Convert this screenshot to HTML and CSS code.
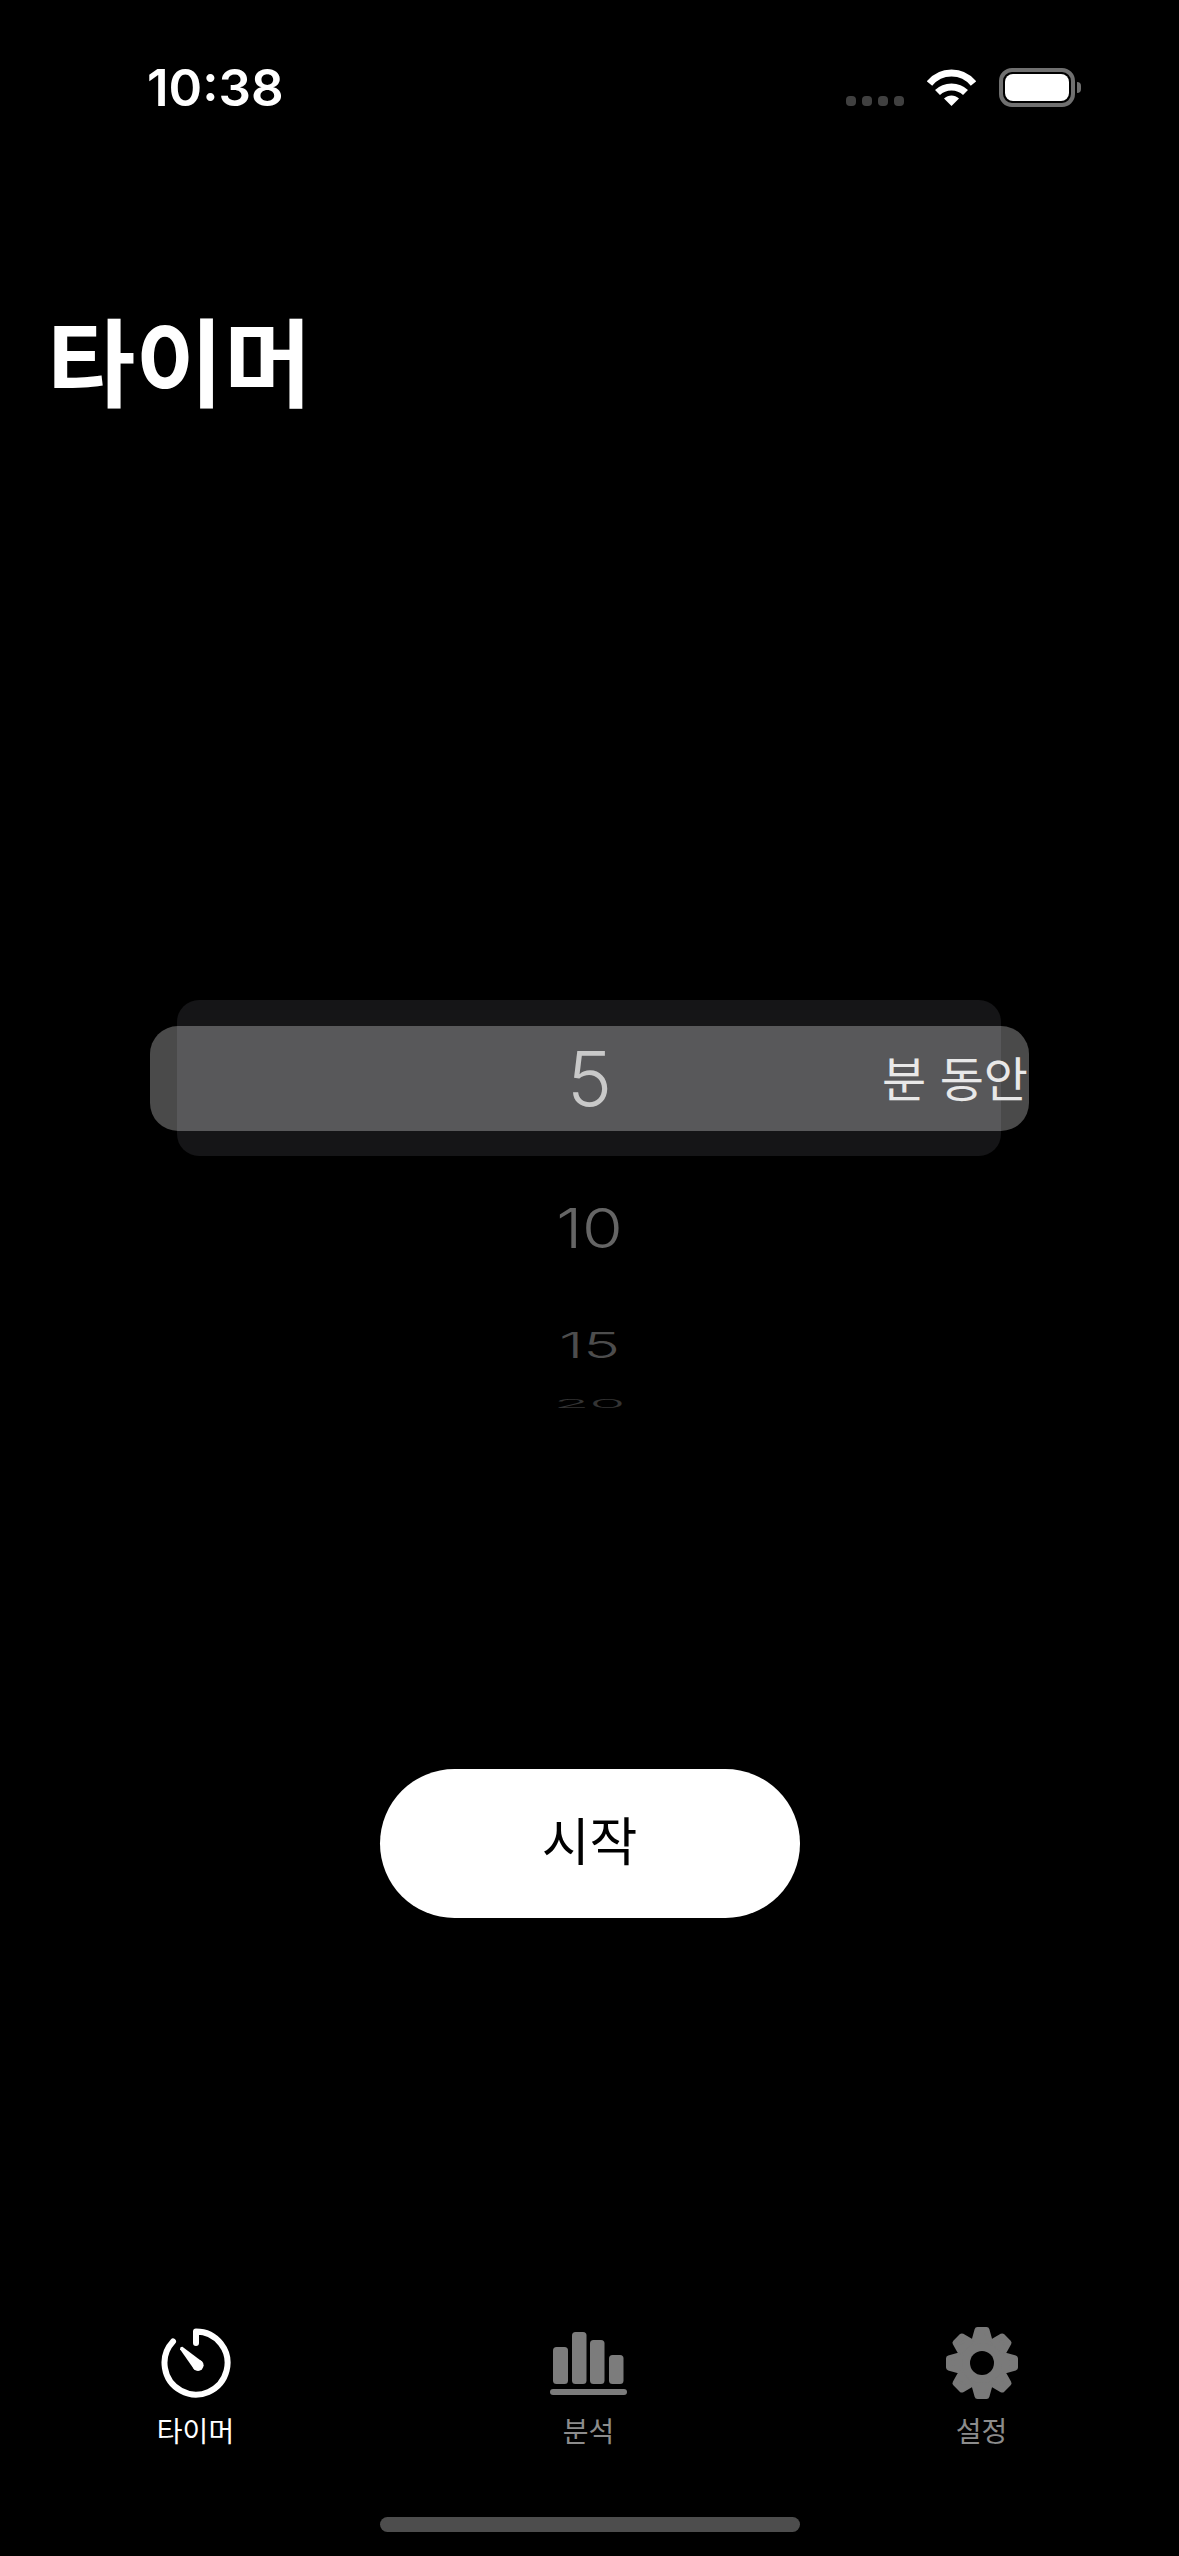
FILE: index.html
```html
<!DOCTYPE html>
<html lang="ko">
<head>
  <meta charset="UTF-8">
  <meta name="viewport" content="width=device-width, initial-scale=1.0">
  <title>타이머</title>
  <link rel="stylesheet" href="styles.css">
</head>
<body>
  <div class="screen">
    <div class="status-bar">
      <span class="status-time">10:38</span>
      <div class="status-icons">
        <div class="signal-dots"><i></i><i></i><i></i><i></i></div>
        <svg class="wifi-icon" width="49" height="37" viewBox="0 0 49 37">
          <path d="M2.5 14.5 C14 0.5 35 0.5 46.5 14.5" fill="none" stroke="#fff" stroke-width="7"/>
          <path d="M10.5 23.5 C18 16 31 16 38.5 23.5" fill="none" stroke="#fff" stroke-width="7"/>
          <path d="M17 29.5 C21.5 25.5 27.5 25.5 32 29.5 L24.5 37 Z" fill="#fff"/>
        </svg>
        <div class="battery">
          <div class="battery-body"><div class="battery-level"></div></div>
          <div class="battery-nub"></div>
        </div>
      </div>
    </div>

    <h1 class="page-title">타이머</h1>

    <div class="picker">
      <div class="picker-plate"></div>
      <div class="picker-selected">
        <span></span>
        <span class="picker-value">5</span>
        <span class="picker-unit">분 동안</span>
      </div>
      <div class="picker-item item-10">10</div>
      <div class="picker-item item-15">15</div>
      <div class="picker-item item-20">20</div>
    </div>

    <button class="start-btn">시작</button>

    <nav class="tab-bar">
      <div class="tab tab-active">
        <svg class="tab-icon" width="72" height="72" viewBox="0 0 72 72">
          <path d="M36 16 V4.5 A31.5 31.5 0 1 1 13 14.5" fill="none" stroke="#fff" stroke-width="6" stroke-linecap="round" stroke-linejoin="round"/>
          <circle cx="38" cy="38.3" r="5.6" fill="#fff"/>
          <path d="M22.4 19.8 Q20 19.6 20 22.2 L34 42.2 L42 34.4 Z" fill="#fff"/>
        </svg>
        <span class="tab-label">타이머</span>
      </div>
      <div class="tab">
        <svg class="tab-icon" width="77" height="72" viewBox="0 0 77 72">
          <rect x="3" y="20" width="15" height="37" rx="3.5" fill="#7c7c7c"/>
          <rect x="22" y="5" width="14.5" height="52" rx="3.5" fill="#7c7c7c"/>
          <rect x="40" y="13" width="14.5" height="44" rx="3.5" fill="#7c7c7c"/>
          <rect x="59" y="28" width="14.5" height="29" rx="3.5" fill="#7c7c7c"/>
          <rect x="0" y="62" width="77" height="6" rx="3" fill="#7c7c7c"/>
        </svg>
        <span class="tab-label">분석</span>
      </div>
      <div class="tab">
        <svg class="tab-icon" width="72" height="72" viewBox="0 0 72 72">
          <g fill="#7a7a7a" stroke="#7a7a7a" stroke-width="6" stroke-linejoin="round">
            <circle cx="36" cy="36" r="23"/>
            <path id="tooth" d="M29 12 L31.5 3 H40.5 L43 12 Z"/>
            <use href="#tooth" transform="rotate(45 36 36)"/>
            <use href="#tooth" transform="rotate(90 36 36)"/>
            <use href="#tooth" transform="rotate(135 36 36)"/>
            <use href="#tooth" transform="rotate(180 36 36)"/>
            <use href="#tooth" transform="rotate(225 36 36)"/>
            <use href="#tooth" transform="rotate(270 36 36)"/>
            <use href="#tooth" transform="rotate(315 36 36)"/>
          </g>
          <circle cx="36" cy="36" r="12" fill="#000"/>
        </svg>
        <span class="tab-label">설정</span>
      </div>
    </nav>

    <div class="home-indicator"></div>
  </div>
</body>
</html>
```

FILE: styles.css
```css
* {
  box-sizing: border-box;
}

body {
  margin: 0;
  background: #000;
  font-family: "Noto Sans CJK KR", "Noto Sans", sans-serif;
  color: #fff;
}

.screen {
  width: 1179px;
  height: 2556px;
  display: flex;
  flex-direction: column;
  overflow: hidden;
}

/* status bar */
.status-bar {
  height: 130px;
  padding: 68px 98px 0 147px;
  display: flex;
  justify-content: space-between;
  align-items: flex-start;
}

.status-time {
  font-family: Inter, sans-serif;
  font-size: 51px;
  font-weight: 600;
  line-height: 39px;
}

.status-icons {
  display: flex;
  align-items: flex-end;
  gap: 23px;
}

.signal-dots {
  display: flex;
  gap: 6px;
  margin-bottom: 1px;
}

.signal-dots i {
  width: 10px;
  height: 10px;
  border-radius: 4px;
  background: #404040;
}

.wifi-icon {
  display: block;
  margin-bottom: 1px;
}

.battery {
  display: flex;
  align-items: center;
  gap: 2px;
}

.battery-body {
  width: 76px;
  height: 39px;
  padding: 2px;
  border: 4px solid #707070;
  border-radius: 13px;
}

.battery-level {
  height: 100%;
  border-radius: 8px;
  background: #fff;
}

.battery-nub {
  width: 4px;
  height: 11px;
  border-radius: 0 4px 4px 0;
  background: #707070;
}

.page-title {
  margin: 176px 0 0;
  padding-left: 47px;
  font-size: 96px;
  font-weight: 700;
  line-height: 104px;
}

/* picker */
.picker {
  position: relative;
  margin: 616px 150px 0;
  height: 388px;
  font-family: Inter, sans-serif;
  text-align: center;
}

.picker-plate {
  position: absolute;
  top: -26px;
  left: 27px;
  width: 824px;
  height: 156px;
  border-radius: 22px;
  background: #151517;
}

.picker-selected {
  position: relative;
  height: 105px;
  display: grid;
  grid-template-columns: 1fr auto 1fr;
  align-items: center;
  border-radius: 28px;
  background: rgba(255, 255, 255, 0.29);
}

.picker-value {
  font-size: 76px;
  font-weight: 350;
  line-height: 105px;
  color: #c9c9c9;
}

.picker-unit {
  justify-self: end;
  padding: 0 1px 6px 0;
  font-family: "Noto Sans CJK KR", sans-serif;
  font-size: 48px;
  font-weight: 400;
  line-height: 60px;
  white-space: nowrap;
  color: #e8e8e8;
}

.picker-item {
  font-weight: 300;
  color: #656565;
}

.item-10 {
  height: 80px;
  margin-top: 57px;
  font-size: 66px;
  line-height: 80px;
  transform: scaleY(0.84);
}

.item-15 {
  height: 50px;
  margin-top: 52px;
  font-size: 62px;
  line-height: 50px;
  color: #4d4d4d;
  transform: scaleY(0.58);
}

.item-20 {
  height: 20px;
  margin-top: 24px;
  font-size: 58px;
  line-height: 20px;
  color: #333;
  transform: scaleY(0.2);
}

.start-btn {
  display: block;
  width: 420px;
  height: 149px;
  margin: 355px auto 0;
  border: none;
  border-radius: 75px;
  background: #fff;
  color: #000;
  font-family: "Noto Sans CJK KR", sans-serif;
  font-size: 52px;
  line-height: 1;
  padding: 0 0 10px;
}

/* tab bar */
.tab-bar {
  margin: 409px 0 0 -1px;
  display: grid;
  grid-template-columns: repeat(3, 393px);
}

.tab {
  display: flex;
  flex-direction: column;
  align-items: center;
  color: #8c8c8c;
}

.tab-active {
  color: #fff;
}

.tab-icon {
  display: block;
}

.tab-label {
  margin-top: 14px;
  font-size: 28px;
  line-height: 34px;
}

.home-indicator {
  width: 420px;
  height: 15px;
  margin: 70px auto 0;
  border-radius: 8px;
  background: #4d4d4d;
}
```
